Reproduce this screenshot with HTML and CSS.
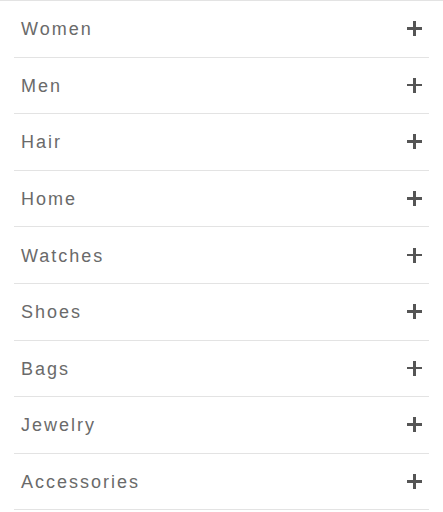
FILE: index.html
```html
<!DOCTYPE html>
<html>
  <head>
    <meta charset="utf-8">
    <meta name="viewport" content="width=device-width, initial-scale=1.0">
    <title>Categories</title>
    <link rel="stylesheet" href="styles.css">
  </head>
  <body>
    <div class="menu">
      <ul class="menu-list">
        <li class="menu-item"><span class="label">Women</span><span class="plus"></span></li>
        <li class="menu-item"><span class="label">Men</span><span class="plus"></span></li>
        <li class="menu-item"><span class="label">Hair</span><span class="plus"></span></li>
        <li class="menu-item"><span class="label">Home</span><span class="plus"></span></li>
        <li class="menu-item"><span class="label">Watches</span><span class="plus"></span></li>
        <li class="menu-item"><span class="label">Shoes</span><span class="plus"></span></li>
        <li class="menu-item"><span class="label">Bags</span><span class="plus"></span></li>
        <li class="menu-item"><span class="label">Jewelry</span><span class="plus"></span></li>
        <li class="menu-item"><span class="label">Accessories</span><span class="plus"></span></li>
      </ul>
    </div>
  </body>
</html>
```

FILE: styles.css
```css
html, body {
  margin: 0;
  padding: 0;
  background-color: #fff;
  color: #6a6a6a;
  font-family: "Liberation Sans", helvetica, arial, sans-serif;
  overflow: hidden;
}
.menu {
  border-top: 1px solid #e3e3e3;
}
.menu-list {
  list-style: none;
  margin: 0 14px;
  padding: 0;
}
.menu-item {
  box-sizing: border-box;
  height: 56.6px;
  display: flex;
  align-items: center;
  justify-content: space-between;
  padding: 0 7px;
  border-bottom: 1px solid #e3e3e3;
  font-size: 18px;
  letter-spacing: 2px;
}
.label {
  padding-top: 2px;
}
.plus {
  position: relative;
  width: 15px;
  height: 15px;
}
.plus::before,
.plus::after {
  content: "";
  position: absolute;
  background-color: #555;
}
.plus::before {
  left: 0;
  right: 0;
  top: 6px;
  height: 2.5px;
}
.plus::after {
  top: 0;
  bottom: 0;
  left: 6.25px;
  width: 2.5px;
}
```
